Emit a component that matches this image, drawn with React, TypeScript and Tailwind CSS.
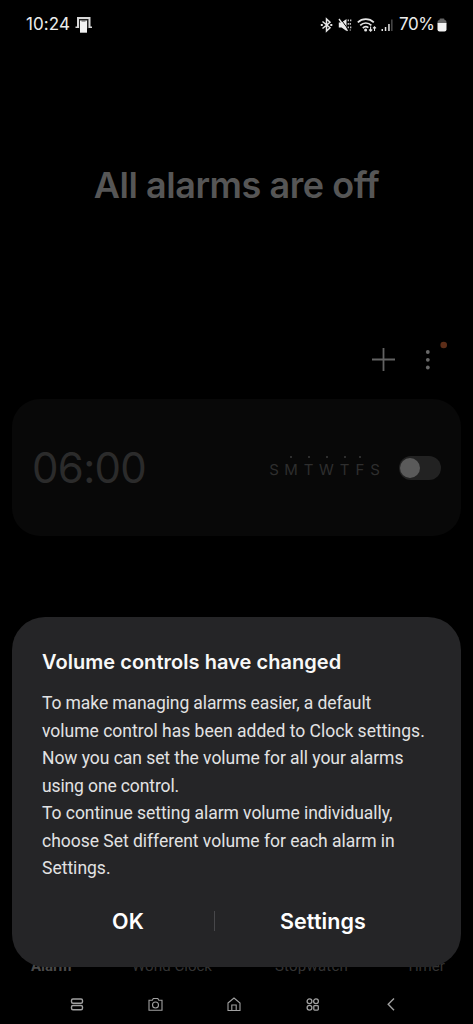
import React from 'react';

const bodyLines: { text: string; tracking: string }[] = [
  { text: 'To make managing alarms easier, a default', tracking: 'tracking-[-0.1px]' },
  { text: 'volume control has been added to Clock settings.', tracking: 'tracking-[0px]' },
  { text: 'Now you can set the volume for all your alarms', tracking: 'tracking-[-0.05px]' },
  { text: 'using one control.', tracking: 'tracking-[-0.12px]' },
  { text: 'To continue setting alarm volume individually,', tracking: 'tracking-[-0.05px]' },
  { text: 'choose Set different volume for each alarm in', tracking: 'tracking-[-0.02px]' },
  { text: 'Settings.', tracking: 'tracking-[0px]' },
];

const days = [
  { label: 'S', dot: false, width: 'w-[16px]' },
  { label: 'M', dot: true, width: 'w-[18px]' },
  { label: 'T', dot: true, width: 'w-[17px]' },
  { label: 'W', dot: true, width: 'w-[19px]' },
  { label: 'T', dot: true, width: 'w-[17px]' },
  { label: 'F', dot: true, width: 'w-[14px]' },
  { label: 'S', dot: false, width: 'w-[16px]' },
];

function StatusBar() {
  return (
    <header className="flex h-[50px] items-center pl-[26px] pr-[26px] text-[#ececec]">
      <span className="w-[45px] whitespace-nowrap font-['Inter',sans-serif] text-[17px] tracking-[0.1px]">10:24</span>
      <svg className="ml-[4px] shrink-0" width="18" height="18" viewBox="0 0 18 18">
        <path d="M2 1h13.500v9.500H17v1.500H.5v-1.500H2z" fill="#d8d8d8" />
        <path d="M4 3h9.500v9.500H4z" fill="#222" />
        <path d="M5 4.500h7v12.200H5z" fill="#f2f2f2" />
        <path d="M6.500 5h4" stroke="#555" strokeWidth="1" />
      </svg>
      <div className="ml-auto flex items-center">
        <svg width="13" height="16" viewBox="0 0 13 16" fill="none" stroke="#e4e4e4" strokeWidth="1.500">
          <path d="M2.500 4.500 10 10.800 6.500 14V2L10 5.200 2.500 11.500" />
          <path d="M.8 8h2M10.300 8h2" strokeWidth="2" />
        </svg>
        <svg className="ml-[5px]" width="14" height="14" viewBox="0 0 14 14" fill="none">
          <path d="M.8 4.600h2.800L8.500 1v12L3.600 9.400H.8z" fill="#ececec" />
          <path d="M2.300 .6 10 11" stroke="#000" strokeWidth="1" />
          <path d="M1 1 9.500 12.800" stroke="#ececec" strokeWidth="1.300" />
          <path d="M10.300 1.500v1.800M10.300 5v1.800M10.300 8.500v1.800M12.700 1.500v1.800M12.300 5v1.800M12.700 8.500v1.800M12.300 11.500v1" stroke="#c8c8c8" strokeWidth="1.300" />
        </svg>
        <svg className="ml-[5px]" width="20" height="16" viewBox="0 0 20 16" fill="none" stroke="#e4e4e4" strokeWidth="1.700">
          <path d="M.8 5.400a11.500 11.500 0 0 1 16 0M3.200 8.300a8 8 0 0 1 11.200 0M5.800 11a4.600 4.600 0 0 1 5.600-.4" />
          <circle cx="8.600" cy="13" r="1.500" fill="#e4e4e4" stroke="none" />
          <path d="M13.600 9.500v4.500M12 12.500l1.600 1.700 1.600-1.700M17.500 14V9.800M16 11.300l1.500-1.600 1.500 1.600" strokeWidth="1.100" />
        </svg>
        <svg className="ml-[4px]" width="13" height="14" viewBox="0 0 13 14">
          <path d="M.5 11h1.500v2H.5zM3.800 9h1.500v4H3.800zM7.200 6h1.500v7H7.200z" fill="#e4e4e4" />
          <path d="M10.200 1.500h1.300V13h-1.300z" fill="#555" />
        </svg>
        <span className="ml-[5px] w-[36px] whitespace-nowrap font-['Inter',sans-serif] text-[17px] tracking-[-0.400px]">70%</span>
        <svg className="ml-[2px]" width="10" height="14" viewBox="0 0 10 14">
          <path d="M2.500 1.500a1 1 0 0 1 1-1h3a1 1 0 0 1 1 1V2A2 2 0 0 1 9.500 4v1.500h-9V4a2 2 0 0 1 2-2z" fill="#666" />
          <path d="M.5 5h9v6.500a2 2 0 0 1-2 2h-5a2 2 0 0 1-2-2z" fill="#f2f2f2" />
        </svg>
      </div>
    </header>
  );
}

function AlarmCard() {
  return (
    <section className="mx-3 flex h-[137px] items-center rounded-[28px] bg-[#080808] pl-[20px] pr-[20px]">
      <span className="font-['Inter',sans-serif] text-[42px] leading-none font-normal tracking-[-0.700px] text-[#2b2b2b]">
        06:00
      </span>
      <div className="ml-auto flex">
        {days.map((day, index) => (
          <div key={index} className={`flex flex-col items-center ${day.width}`}>
            <span className={day.dot ? 'size-[2px] rounded-full bg-[#3a3a3a]' : 'size-[2px]'} />
            <span className="mt-[3px] font-['Inter',sans-serif] text-[15px] leading-[18px] text-[#2e2e2e]">
              {day.label}
            </span>
          </div>
        ))}
      </div>
      <div className="ml-[16px] flex h-[24px] w-[42px] items-center rounded-full bg-[#222222] pl-[1px]">
        <div className="size-[20px] rounded-full bg-[#5a5a5a]" />
      </div>
    </section>
  );
}

function Tabs() {
  return (
    <nav className="flex h-[24px] items-center text-[15px] leading-[20px] text-[#343434]">
      <span className="ml-[31px] w-[41px] font-bold text-[#4a4a4a]">Alarm</span>
      <span className="ml-[60px] w-[80px] whitespace-nowrap">World Clock</span>
      <span className="ml-[63px] w-[73px] tracking-[0.2px]">Stopwatch</span>
      <span className="ml-[58px]">Timer</span>
    </nav>
  );
}

function VolumeDialog() {
  return (
    <div
      role="dialog"
      className="absolute inset-x-3 top-[617px] h-[350px] rounded-[33px] bg-[#252527] px-[30px] pt-[31px]"
    >
      <h2 className="whitespace-nowrap font-['Inter',sans-serif] text-[20px] leading-[28px] font-semibold tracking-[0.040px] text-[#f8f8f8]">
        Volume controls have changed
      </h2>
      <div className="mt-[14px] text-[17.5px] leading-[27.55px] text-[#e2e2e3]">
        {bodyLines.map((line) => (
          <p key={line.text} className={`whitespace-nowrap ${line.tracking}`}>
            {line.text}
          </p>
        ))}
      </div>
      <div className="mt-[23px] -ml-[30px] flex h-[30px] items-center font-['Inter',sans-serif] text-[21.500px] font-semibold tracking-[0.1px] text-white">
        <button className="ml-[30px] w-[172px]">OK</button>
        <span className="h-[20px] w-px bg-[#47474a]" />
        <button className="ml-[22px] w-[172px]">Settings</button>
      </div>
    </div>
  );
}

function NavigationBar() {
  return (
    <footer className="flex h-[40px] items-center justify-between pl-[69px] pr-[74px] text-[#a0a0a0]">
      <svg width="16" height="16" viewBox="0 0 16 16" fill="none" stroke="currentColor" strokeWidth="1.400">
        <rect x="2.500" y="3" width="11" height="4.200" rx="1.500" />
        <rect x="2.500" y="9.500" width="11" height="4.200" rx="1.500" />
      </svg>
      <svg width="16" height="16" viewBox="0 0 16 16" fill="none" stroke="currentColor" strokeWidth="1.100">
        <path d="M1 4.300h3.300l1-1.800h4.500l1 1.800H14v10H1z" />
        <circle cx="7.500" cy="9" r="3" />
      </svg>
      <svg width="16" height="16" viewBox="0 0 16 16" fill="none" stroke="currentColor" strokeWidth="1.100">
        <path d="M2 7 8 2l6 5v7.500H2zM5.800 14.500V9h4.400v5.500" />
      </svg>
      <svg width="16" height="16" viewBox="0 0 16 16" fill="none" stroke="currentColor" strokeWidth="1.300">
        <circle cx="4.500" cy="5.300" r="2.400" />
        <circle cx="11" cy="5.300" r="2.400" />
        <circle cx="4.500" cy="11.800" r="2.400" />
        <rect x="8.800" y="9.600" width="4.500" height="4.500" rx=".8" />
      </svg>
      <svg width="16" height="16" viewBox="0 0 16 16" fill="none" stroke="currentColor" strokeWidth="1.400">
        <path d="M11 2.500 5.200 8.200l5.800 6" />
      </svg>
    </footer>
  );
}

export default function App() {
  return (
    <main className="relative flex h-[1024px] w-full flex-col overflow-hidden bg-black font-['Roboto',sans-serif]">
      <StatusBar />
      <h1 className="mt-[113px] text-center font-['Inter',sans-serif] text-[36px] leading-[44px] font-semibold tracking-[-0.450px] text-[#565656]">
        All alarms are off
      </h1>
      <div className="mt-[133px] flex h-[40px] pl-[371px]">
        <svg className="shrink-0" width="78" height="40" viewBox="0 0 78 40" fill="none">
          <path d="M1 19.500h23M12.500 8v23" stroke="#626262" strokeWidth="1.800" />
          <circle cx="56.800" cy="12" r="1.900" fill="#686868" />
          <circle cx="56.800" cy="19.800" r="1.900" fill="#686868" />
          <circle cx="56.800" cy="27.500" r="1.900" fill="#686868" />
          <circle cx="72.700" cy="5" r="3.300" fill="#5c2d18" />
        </svg>
      </div>
      <div className="mt-[19px]">
        <AlarmCard />
      </div>
      <div className="mt-auto">
        <Tabs />
        <div className="mt-[6px]">
          <NavigationBar />
        </div>
      </div>
      <VolumeDialog />
    </main>
  );
}
